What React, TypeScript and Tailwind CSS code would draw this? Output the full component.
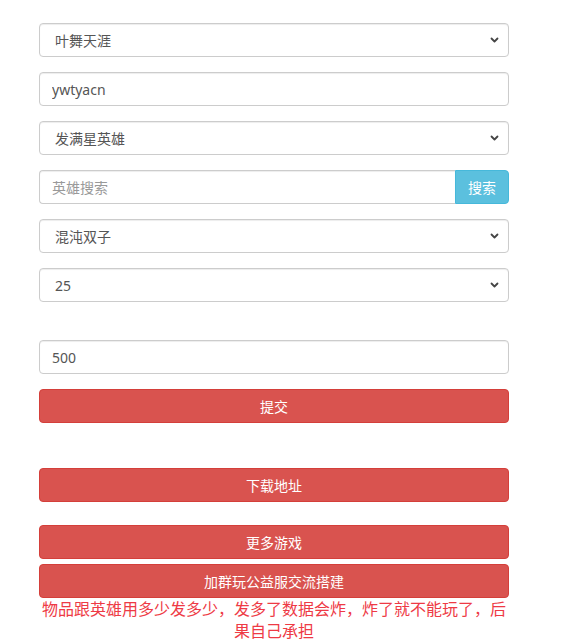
import { useState } from 'react';

const font = { fontFamily: '"Noto Sans", "Noto Sans CJK SC", sans-serif' };

function Chevron() {
    return (
        <svg width="9" height="6" viewBox="0 0 9 6" className="pointer-events-none absolute right-[10px] top-[14px]">
            <path d="M1.5 1.5 L4.5 4.5 L7.5 1.5" fill="none" stroke="#444" strokeWidth="1.8" strokeLinecap="round" strokeLinejoin="round" />
        </svg>
    );
}

function Select({ value, options }: { value: string; options: string[] }) {
    const [v, setV] = useState(value);
    return (
        <div className="relative">
            <select
                value={v}
                onChange={(e) => setV(e.target.value)}
                className="block h-[34px] w-full appearance-none rounded-[4px] border border-[#ccc] bg-white pl-[15px] pr-8 text-[14px] text-[#555] shadow-[inset_0_1px_1px_rgba(0,0,0,0.075)] outline-none"
            >
                {options.map((o) => (
                    <option key={o} value={o}>{o}</option>
                ))}
            </select>
            <Chevron />
        </div>
    );
}

function Input({ value, placeholder }: { value?: string; placeholder?: string }) {
    return (
        <input
            defaultValue={value}
            placeholder={placeholder}
            className="block h-[34px] w-full rounded-[4px] border border-[#ccc] bg-white px-3 text-[14px] text-[#555] placeholder:text-[#999] shadow-[inset_0_1px_1px_rgba(0,0,0,0.075)] outline-none"
        />
    );
}

function RedButton({ children }: { children: string }) {
    return (
        <button className="block h-[34px] w-full rounded-[4px] border border-[#d43f3a] bg-[#d9534f] text-[14px] text-white">
            {children}
        </button>
    );
}

export default function App() {
    return (
        <div className="min-h-screen bg-white" style={font}>
            <div className="ml-[39px] w-[470px] pt-[23px]">
                <div className="flex flex-col gap-[15px]">
                    <Select value="叶舞天涯" options={['叶舞天涯']} />
                    <Input value="ywtyacn" />
                    <Select value="发满星英雄" options={['发满星英雄']} />
                    <div className="flex">
                        <input
                            placeholder="英雄搜索"
                            className="block h-[34px] min-w-0 flex-1 rounded-l-[4px] border border-r-0 border-[#ccc] bg-white px-3 text-[14px] text-[#555] placeholder:text-[#999] shadow-[inset_0_1px_1px_rgba(0,0,0,0.075)] outline-none"
                        />
                        <button className="h-[34px] w-[54px] rounded-r-[4px] border border-[#46b8da] bg-[#5bc0de] text-[14px] text-white">
                            搜索
                        </button>
                    </div>
                    <Select value="混沌双子" options={['混沌双子']} />
                    <Select value="25" options={['25']} />
                </div>

                {/* quantity + submit */}
                <div className="mt-[38px] flex flex-col gap-[15px]">
                    <Input value="500" />
                    <RedButton>提交</RedButton>
                </div>

                <div className="mt-[45px]">
                    <RedButton>下载地址</RedButton>
                </div>

                <div className="mt-[23px] flex flex-col gap-[5px]">
                    <RedButton>更多游戏</RedButton>
                    <RedButton>加群玩公益服交流搭建</RedButton>
                </div>

                <p className="text-center text-[16px] leading-[22px] text-[#ee3a45]">
                    物品跟英雄用多少发多少，发多了数据会炸，炸了就不能玩了，后果自己承担
                </p>
            </div>
        </div>
    );
}
